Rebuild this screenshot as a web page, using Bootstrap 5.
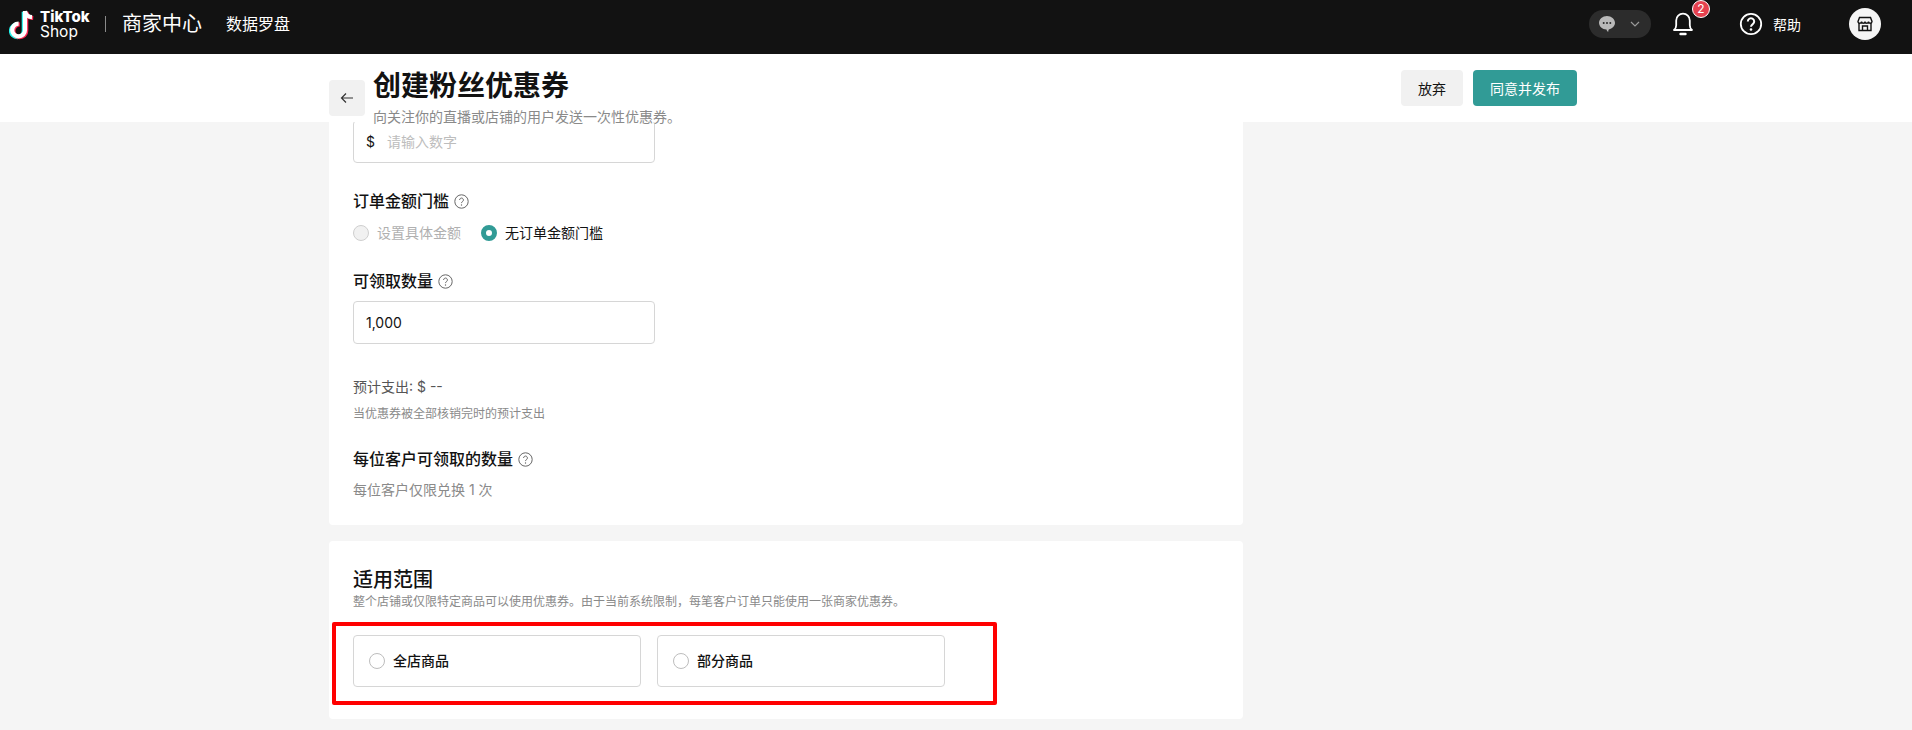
<!DOCTYPE html>
<html lang="zh">
<head>
<meta charset="utf-8">
<title>创建粉丝优惠券</title>
<link rel="stylesheet" href="https://cdn.jsdelivr.net/npm/bootstrap@5.3.0/dist/css/bootstrap.min.css">
<style>
html,body{height:730px;overflow:hidden}
body{background:#f5f5f5;color:#121212;font-family:Inter,"Noto Sans CJK SC",sans-serif;font-size:14px}
.topbar{height:54px;background:#121212;color:#fff;padding:0 31px 6px 9px;position:relative;z-index:3}
.logo-words{font-family:Inter,sans-serif;margin-left:4px;width:48px;white-space:nowrap}
.logo-words b{display:block;font-size:15px;line-height:15px;font-weight:800;letter-spacing:0}
.logo-words span{display:block;font-size:15.500px;line-height:15px;font-weight:400;letter-spacing:0}
.logo-sep{width:1px;height:16px;background:#8a8a8a;margin:0 16px 0 17px}
.brand-name{font-size:20px;line-height:28px;font-weight:400;margin-right:24px}
.nav-name{font-size:16px;font-weight:400}
.chat-pill{width:62px;height:28px;border-radius:14px;background:#2c2c2c;padding:0 11px 0 9px;margin-right:20px}
.bell-wrap{position:relative;width:24px;height:28px;margin-right:44px}
.bell-num{position:absolute;left:21px;top:-10px;width:18px;height:18px;border-radius:50%;background:#e6414f;border:1px solid #fff;font-size:12px;line-height:16px;text-align:center;color:#fff}
.help-label{font-size:14px;margin:0 48px 0 10px}
.shop-dot{width:32px;height:32px;border-radius:50%;background:#f5f5f5}
.actionbar{height:68px;background:#fff;position:relative;z-index:2;padding:16px 335px 0 329px}
.back-box{width:36px;height:36px;border-radius:4px;background:#f1f1f1;margin:10px 8px 0 0;flex:none}
.page-title{font-size:28px;line-height:36px;font-weight:700;margin:-2px 0 0}
.page-sub{font-size:14px;line-height:20px;color:#8a8a8a;margin-top:3px}
.act-btn{height:36px;border:0;border-radius:4px;font-size:14px;padding:0 17px;display:flex;align-items:center}
.act-ghost{background:#f1f1f1;color:#121212;margin-right:10px}
.act-main{background:#319b96;color:#fff}
.content-col{width:914px;margin-left:329px}
.panel{background:#fff;border-radius:4px;padding-left:24px}
.panel-a{margin-top:-25px;padding-top:23px;height:428px;margin-bottom:16px}
.panel-b{height:178px;padding-top:26px}
.field-box{width:302px;height:43px;border:1px solid #d6d6d6;border-radius:4px;padding:0 12px;display:flex;align-items:center;background:#fff}
.ph-text{color:#bdbdbd;margin-left:12px}
.sect-label{font-size:16px;line-height:22px;font-weight:500;color:#121212}
.tip-ico{margin-left:5px;flex:none}
.dot-off{width:16px;height:16px;border-radius:50%;border:1px solid #cfcfcf;background:#f1f1f1;flex:none}
.dot-on{width:16px;height:16px;border-radius:50%;border:5px solid #319b96;background:#fff;flex:none;margin-left:20px}
.dim{color:#b0b0b0}
.small-hint{font-size:12px;line-height:18px;color:#8a8a8a}
.spend-line{color:#555;line-height:20px}
.limit-line{color:#8a8a8a;line-height:20px}
.step-27{margin-top:27px}
.step-10{margin-top:10px}
.step-9{margin-top:9px}
.step-33{margin-top:33px}
.step-8{margin-top:8px}
.step-25{margin-top:25px}
.scope-title{font-size:20px;line-height:26px;font-weight:500}
.red-frame{width:665px;height:83px;border:4px solid #f00;border-radius:2px;margin:11px 0 0 -21px;padding:9px 17px;gap:16px}
.scope-card{width:288px;height:52px;border:1px solid #d6d6d6;border-radius:4px;padding:0 15px 1px;font-weight:500}
.dot-blank{width:16px;height:16px;border-radius:50%;border:1px solid #bdbdbd;background:#fff;margin-right:8px;flex:none}
</style>
</head>
<body class="d-flex flex-column">
<header class="topbar d-flex align-items-center">
  <svg width="27" height="32" viewBox="0 0 27 32" fill="none" aria-hidden="true">
    <g stroke-width="4.2" fill="none">
      <path d="M16 3v19a6.4 6.4 0 1 1-6.4-6.4" stroke="#25f4ee" transform="translate(-1.2 .8)"/>
      <path d="M16 3v19a6.4 6.4 0 1 1-6.4-6.4M16 3c.6 3.6 3.4 6 7 6.2" stroke="#fe2c55" transform="translate(1.2 .8)"/>
      <path d="M16 3v19a6.4 6.4 0 1 1-6.4-6.4M16 3c.6 3.6 3.4 6 7 6.2" stroke="#fff"/>
    </g>
  </svg>
  <div class="logo-words"><b>TikTok</b><span>Shop</span></div>
  <div class="logo-sep"></div>
  <div class="brand-name">商家中心</div>
  <div class="nav-name">数据罗盘</div>
  <div class="ms-auto d-flex align-items-center">
    <div class="chat-pill d-flex align-items-center justify-content-between">
      <svg width="18" height="18" viewBox="0 0 18 18"><path d="M9 1C4.6 1 1 4 1 7.8c0 3.6 3.3 6.6 7.5 6.8.2 1 .9 1.9 1.7 2.4-.1-.8.2-1.7.6-2.6C14.400 13.600 17 10.900 17 7.800 17 4 13.400 1 9 1z" fill="#b9b9b9"/><circle cx="5.700" cy="8" r="1" fill="#2c2c2c"/><circle cx="9" cy="8" r="1" fill="#2c2c2c"/><circle cx="12.300" cy="8" r="1" fill="#2c2c2c"/></svg>
      <svg width="10" height="6" viewBox="0 0 10 6" fill="none"><path d="M1 1l4 4 4-4" stroke="#9a9a9a" stroke-width="1.200"/></svg>
    </div>
    <div class="bell-wrap">
      <svg width="24" height="28" viewBox="0 0 24 28" fill="none"><path d="M3 20c1.800-1.400 2.200-2.600 2.200-4.800v-4.700a6.800 6.800 0 0 1 13.600 0v4.700c0 2.200.4 3.400 2.200 4.800z" stroke="#fff" stroke-width="1.800" stroke-linejoin="round"/><path d="M9.500 24h5" stroke="#fff" stroke-width="2.400" stroke-linecap="round"/></svg>
      <div class="bell-num">2</div>
    </div>
    <svg width="24" height="24" viewBox="0 0 24 24" fill="none"><circle cx="12" cy="12" r="10.200" stroke="#fff" stroke-width="1.800"/><path d="M8.800 9.500a3.200 3.200 0 1 1 5 2.600c-1.100.8-1.800 1.300-1.800 2.700" stroke="#fff" stroke-width="2"/><circle cx="12" cy="17.500" r="1.300" fill="#fff"/></svg>
    <div class="help-label">帮助</div>
    <div class="shop-dot d-flex align-items-center justify-content-center">
      <svg width="18" height="18" viewBox="0 0 18 18" fill="none" stroke="#121212" stroke-width="1.400"><path d="M3 8v7.500h12V8"/><path d="M2 6.500 3.500 2.500h11L16 6.500c0 1-.8 1.700-1.800 1.700-.9 0-1.700-.7-1.700-1.700 0 1-.8 1.700-1.700 1.700S9 7.500 9 6.500c0 1-.8 1.700-1.700 1.700s-1.700-.7-1.700-1.700c0 1-.8 1.700-1.800 1.700S2 7.500 2 6.500z"/><path d="M6.500 15.500v-4.500h5v4.500"/></svg>
    </div>
  </div>
</header>

<section class="actionbar d-flex align-items-start">
  <div class="back-box d-flex align-items-center justify-content-center">
    <svg width="14" height="12" viewBox="0 0 14 12" fill="none" stroke="#333" stroke-width="1.200"><path d="M13 6H1.500M6 1.500 1.500 6 6 10.500"/></svg>
  </div>
  <div class="flex-grow-1">
    <h1 class="page-title">创建粉丝优惠券</h1>
    <div class="page-sub">向关注你的直播或店铺的用户发送一次性优惠券。</div>
  </div>
  <div class="d-flex align-items-center">
    <button class="act-btn act-ghost" type="button">放弃</button>
    <button class="act-btn act-main" type="button">同意并发布</button>
  </div>
</section>

<main class="content-col">
  <div class="panel panel-a">
    <div class="field-box"><span>$</span><span class="ph-text">请输入数字</span></div>
    <div class="sect-label d-flex align-items-center step-27">订单金额门槛
      <svg class="tip-ico" width="15" height="15" viewBox="0 0 15 15" fill="none"><circle cx="7.500" cy="7.500" r="6.700" stroke="#666"/><path d="M5.600 6a1.900 1.900 0 1 1 3 1.500c-.7.500-1.100.800-1.100 1.600" stroke="#666"/><circle cx="7.500" cy="11" r=".7" fill="#666"/></svg>
    </div>
    <div class="d-flex align-items-center step-10">
      <span class="dot-off me-2"></span><span class="dim">设置具体金额</span>
      <span class="dot-on me-2"></span><span>无订单金额门槛</span>
    </div>
    <div class="sect-label d-flex align-items-center step-27">可领取数量
      <svg class="tip-ico" width="15" height="15" viewBox="0 0 15 15" fill="none"><circle cx="7.500" cy="7.500" r="6.700" stroke="#666"/><path d="M5.600 6a1.900 1.900 0 1 1 3 1.500c-.7.500-1.100.800-1.100 1.600" stroke="#666"/><circle cx="7.500" cy="11" r=".7" fill="#666"/></svg>
    </div>
    <div class="field-box step-9">1,000</div>
    <div class="spend-line step-33">预计支出: $ --</div>
    <div class="small-hint step-8">当优惠券被全部核销完时的预计支出</div>
    <div class="sect-label d-flex align-items-center step-25">每位客户可领取的数量
      <svg class="tip-ico" width="15" height="15" viewBox="0 0 15 15" fill="none"><circle cx="7.500" cy="7.500" r="6.700" stroke="#666"/><path d="M5.600 6a1.900 1.900 0 1 1 3 1.500c-.7.500-1.100.800-1.100 1.600" stroke="#666"/><circle cx="7.500" cy="11" r=".7" fill="#666"/></svg>
    </div>
    <div class="limit-line step-10">每位客户仅限兑换 1 次</div>
  </div>
  <div class="panel panel-b">
    <div class="scope-title">适用范围</div>
    <div class="small-hint">整个店铺或仅限特定商品可以使用优惠券。由于当前系统限制，每笔客户订单只能使用一张商家优惠券。</div>
    <div class="red-frame d-flex">
      <div class="scope-card d-flex align-items-center"><span class="dot-blank"></span>全店商品</div>
      <div class="scope-card d-flex align-items-center"><span class="dot-blank"></span>部分商品</div>
    </div>
  </div>
</main>
<script src="https://cdn.jsdelivr.net/npm/bootstrap@5.3.0/dist/js/bootstrap.bundle.min.js"></script>
</body>
</html>
